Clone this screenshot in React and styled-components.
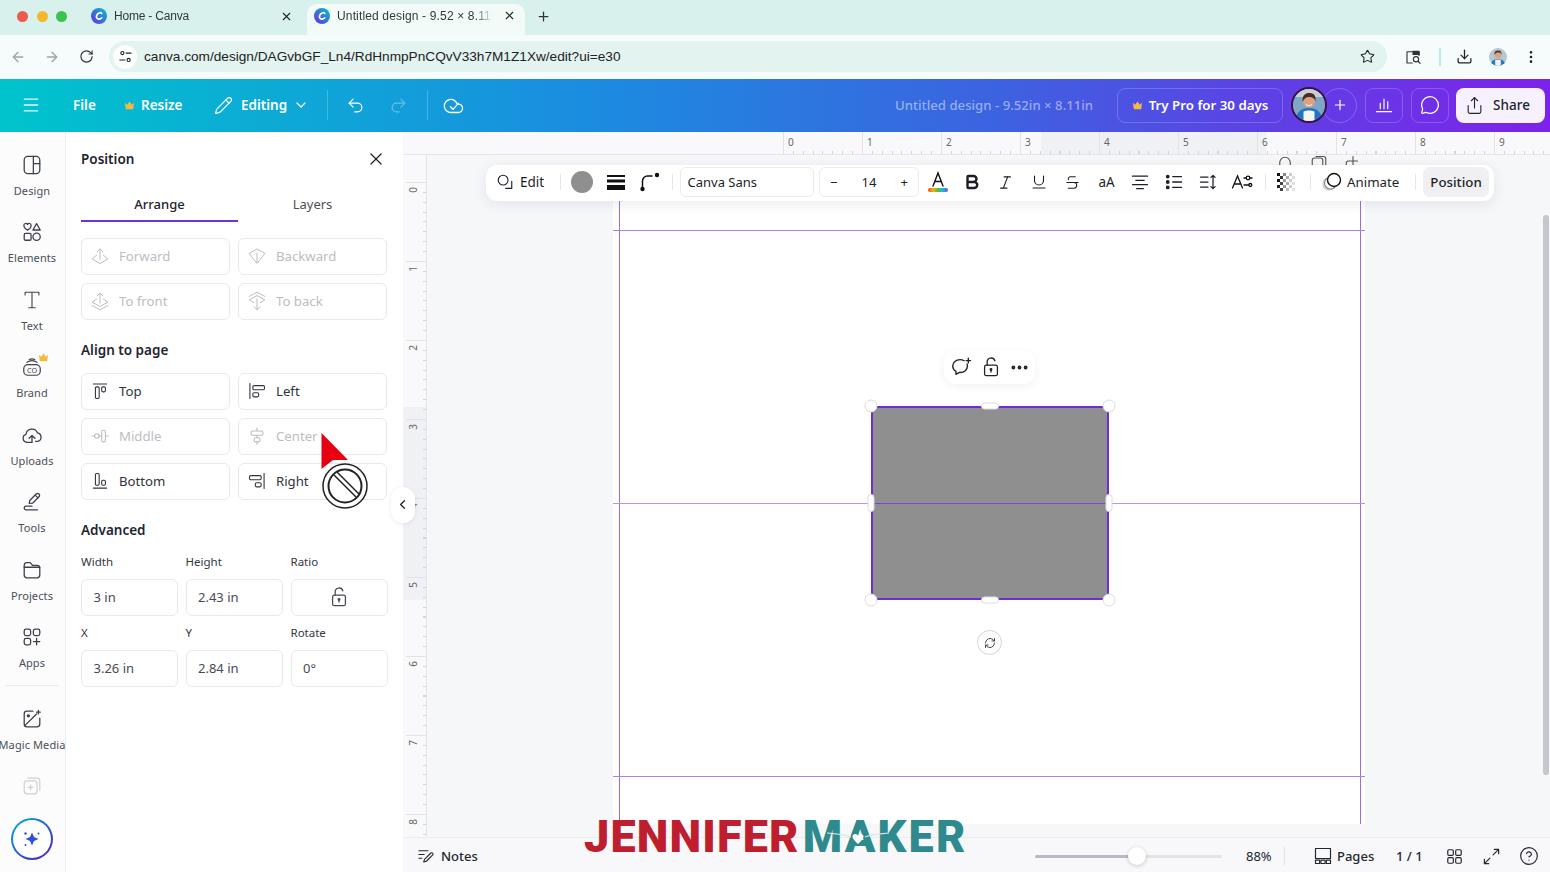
import React from "react";
import styled, { createGlobalStyle } from "styled-components";
import {
  X, Plus, ArrowLeft, ArrowRight, RotateCw, Star, Download, EllipsisVertical, Menu, Pencil, ChevronDown,
  Undo2, Redo2, Share, MessageCircle, ChevronLeft, CircleHelp, Ellipsis, RefreshCw,
  Bold, Italic, Underline, Strikethrough,
} from "lucide-react";

const Global = createGlobalStyle`
  html, body { margin: 0; padding: 0; width: 1550px; height: 872px; overflow: hidden; background: #fff; }
  body { font-family: "Noto Sans", "Open Sans", sans-serif; color: #1f2430; }
  * { box-sizing: border-box; }
`;

const Root = styled.div`position: relative; width: 1550px; height: 872px; overflow: hidden; display: flex; flex-direction: column;`;

/* browser chrome */
const TabStrip = styled.div`height: 35px; background: #d8f1ec; display: flex; align-items: center; position: relative; flex: none; padding-bottom: 3px;`;
const Light = styled.span`width: 11px; height: 11px; border-radius: 50%; background: ${p => p.$c}; margin-left: ${p => p.$ml}px; flex: none;`;
const Tab = styled.div`
  width: ${p => p.$w}px; margin-left: ${p => p.$ml}px; flex: none; gap: 7px; display: flex; align-items: center;
  align-self: ${p => (p.$active ? "stretch" : "center")};
  margin-top: ${p => (p.$active ? 4 : 0)}px; margin-bottom: ${p => (p.$active ? -3 : 0)}px;
  padding: ${p => (p.$active ? "0 9px 8px 7px" : "0 9px 0 7px")};
  height: ${p => (p.$active ? "auto" : "28px")};
  background: ${p => (p.$active ? "#f3fbf9" : "transparent")}; border-radius: 10px 10px 0 0;
`;
const TabText = styled.span`
  font: 12px "Liberation Sans", Arial, sans-serif; color: #2f3a3a; flex: 1; min-width: 0; white-space: nowrap; overflow: hidden;
  letter-spacing: ${p => (p.$active ? 0.15 : -0.2)}px;
  -webkit-mask-image: linear-gradient(90deg, #000 86%, transparent 98%);
`;
const NewTab = styled.span`margin-left: 11px; display: flex; color: #333;`;
const AddressRow = styled.div`height: 44px; background: #f6fcfb; display: flex; align-items: center; flex: none; padding: 0 0 1px 1px;`;
const NavIcon = styled.span`
  width: ${p => p.$w || 34}px; margin-left: ${p => p.$ml || 0}px; flex: none; display: flex; justify-content: center; color: ${p => p.$c || "#333"};
`;
const Pill = styled.div`
  margin-left: 6px; width: 1278px; height: 31px; border-radius: 16px; background: #e3f3f0; display: flex; align-items: center; padding: 0 12px 0 4px;
`;
const TuneBadge = styled.span`width: 24px; height: 24px; border-radius: 50%; background: #fbfefd; display: flex; align-items: center; justify-content: center; color: #222;`;
const Url = styled.span`font: 13.65px "Liberation Sans", Arial, sans-serif; color: #222; margin-left: 7px; flex: 1;`;
const VLine = styled.span`width: 2px; height: 18px; background: #bdeaea; margin: 0 15px 0 9px;`;

/* canva header */
const Header = styled.header`
  height: 53px; flex: none; display: flex; align-items: center; color: #fff; padding: 0 5px 1px 0;
  background: linear-gradient(90deg, #00c4cc 0%, #1b8ce0 38%, #3c63e0 64%, #5a44e4 80%, #7d22ea 100%);
`;
const HItem = styled.div`
  display: flex; align-items: center; gap: ${p => p.$gap || 0}px; margin-left: ${p => p.$ml}px; width: ${p => p.$w}px; flex: none;
  font-size: 13.5px; font-weight: 600; color: ${p => p.$c || "#fff"}; white-space: nowrap; opacity: ${p => p.$o || 1};
`;
const HSep = styled.span`width: 1px; height: 30px; background: rgba(255,255,255,.22); margin-left: ${p => p.$ml}px; flex: none;`;
const DesignTitle = styled.div`margin-left: auto; font-size: 13.2px; font-weight: 500; color: rgba(255,255,255,.48); white-space: nowrap; width: 198px;`;
const ProBtn = styled.div`
  margin-left: 24px; width: 166px; height: 35px; border-radius: 8px; border: 1px solid rgba(255,255,255,.2); display: flex; align-items: center; justify-content: center; gap: 6px;
  font-size: 13.3px; font-weight: 600; white-space: nowrap;
`;
const People = styled.div`margin-left: 8px; display: flex; align-items: center; position: relative; width: 66px;`;
const AddPerson = styled.span`position: absolute; left: 31px; width: 35px; height: 35px; border-radius: 50%; border: 1px solid rgba(255,255,255,.22); display: flex; align-items: center; justify-content: center;`;
const AvatarClip = styled.span`position: relative; width: 36px; height: 36px; border-radius: 50%; overflow: hidden; border: 2px solid #3a1240; z-index: 1; display: block;`;
const HeadBtn = styled.span`margin-left: ${p => p.$ml}px; width: 38px; height: 35px; border-radius: 8px; border: 1px solid rgba(255,255,255,.2); display: flex; align-items: center; justify-content: center;`;
const ShareBtn = styled.div`
  margin-left: 7px; width: 89px; height: 35px; border-radius: 8px; background: #f6f1fd; color: #1f2430; display: flex; align-items: center; justify-content: center; gap: 9px; font-size: 13.5px; font-weight: 500; padding-right: 6px;
`;

/* body */
const Body = styled.div`flex: 1; display: flex; min-height: 0;`;
const Rail = styled.nav`width: 66px; flex: none; background: #fcfcfd; border-right: 1px solid #eeeef1; padding: 21.5px 1px 0 0; display: flex; flex-direction: column; align-items: center;`;
const RailItem = styled.div`height: ${p => p.$h || 67.5}px; width: 64px; flex: none; display: flex; flex-direction: column; align-items: center; color: #3c4048; position: relative;`;
const RailLabel = styled.span`margin-top: 8px; font-size: 11px; line-height: 14px; color: #4b4f58; white-space: nowrap; letter-spacing: .1px;`;
const RailRule = styled.div`width: 54px; height: 1px; background: #ececef; margin: -9px 0 22px; flex: none;`;
const Crown = styled.span`position: absolute; left: 38px; top: -4px; display: flex;`;
const MagicBtn = styled.div`
  width: 42px; height: 42px; border-radius: 50%; margin-top: 2px; flex: none; padding: 2px;
  background: linear-gradient(135deg, #00b8c8, #2d4fd0 60%, #5a1fc0);
`;
const MagicInner = styled.div`width: 100%; height: 100%; background: #fff; border-radius: 50%; display: flex; align-items: center; justify-content: center;`;

const Panel = styled.aside`width: 337px; flex: none; background: #fff; padding: 0 15px; position: relative;`;
const PanelHead = styled.div`height: 54px; display: flex; align-items: center; justify-content: space-between; font-size: 13.5px; font-weight: 600; color: #1f2430; padding-right: 2px;`;
const Tabs = styled.div`display: grid; grid-template-columns: 157px 149px; height: 36px; margin-bottom: 16px;`;
const PanelTab = styled.div`
  display: flex; align-items: center; justify-content: center; font-size: 13px; height: 36px; padding-top: 1px;
  color: ${p => (p.$on ? "#1f2430" : "#4b4f58")}; font-weight: ${p => (p.$on ? 500 : 400)};
  border-bottom: 2px solid ${p => (p.$on ? "#6b35d9" : "transparent")};
`;
const BtnGrid = styled.div`display: grid; grid-template-columns: 149px 149px; gap: 8px;`;
const ActBtn = styled.div`
  height: 37px; border: 1px solid #e9e9ed; border-radius: 6px; display: flex; align-items: center; padding: 0 0 1px 8px; gap: 9px; font-size: 13.2px;
  color: ${p => (p.$off ? "#bcbdc3" : "#30343c")};
`;
const Heading = styled.div`font-size: 13.5px; font-weight: 600; color: #1f2430; height: 20px; line-height: 20px; margin: 20px 0 ${p => p.$mb}px;`;
const FieldGrid = styled.div`display: grid; grid-template-columns: 97px 97.5px 97.5px; column-gap: 7.5px; row-gap: 8.5px;`;
const Field = styled.div`display: flex; flex-direction: column; gap: 8.5px;`;
const FieldLabel = styled.label`font-size: 11.5px; line-height: 15px; height: 17px; color: #33373f;`;
const FieldBox = styled.div`
  height: 37px; border: 1px solid #e9e9ed; border-radius: 6px; display: flex; align-items: center; font-size: 13px; color: #474b53; padding-bottom: 1px;
  padding-left: ${p => (p.$center ? 0 : 11.5)}px; justify-content: ${p => (p.$center ? "center" : "flex-start")};
`;
const Collapse = styled.div`
  position: absolute; left: 325px; top: 355px; width: 24px; height: 36px; border-radius: 12px; background: #fff; box-shadow: 0 1px 5px rgba(0,0,0,.08);
  display: flex; align-items: center; justify-content: center; color: #222; z-index: 3; padding-right: 1px; padding-bottom: 2px;
`;

const Main = styled.main`flex: 1; display: flex; flex-direction: column; position: relative; min-width: 0;`;
const TopRuler = styled.div`
  height: 23px; flex: none; display: flex; border-bottom: 1px solid #e4e4ea; padding-left: 380px; font-size: 10px; color: #666; background-color: #f9f9fb;
  background-image:
    repeating-linear-gradient(90deg, #d4d4da 0 1px, transparent 1px 9.875px),
    linear-gradient(90deg, transparent 638px, #f0f1f4 638px 863px, transparent 863px);
  background-size: 100% 3px, 100% 100%;
  background-position: 380px bottom, 0 0;
  background-repeat: no-repeat;
`;
const RulerCell = styled.span`width: 79px; flex: none; border-left: 1px solid #e2e2e8; padding-left: 4px; line-height: 20px; height: 22px;`;
const Middle = styled.div`flex: 1; display: flex; min-height: 0;`;
const LeftRuler = styled.div`
  width: 24px; flex: none; border-right: 1px solid #e4e4ea; padding-top: 27px; overflow: hidden; font-size: 10px; color: #666; background-color: #f9f9fb;
  background-image:
    repeating-linear-gradient(180deg, #d4d4da 0 1px, transparent 1px 9.875px),
    linear-gradient(180deg, transparent 252px, #f0f1f4 252px 445px, transparent 445px);
  background-size: 3px 100%, 100% 100%;
  background-position: right 27px, 0 0;
  background-repeat: no-repeat;
`;
const VCell = styled.div`height: 79px; border-top: 1px solid #e2e2e8; position: relative; width: 20px; margin-left: 3px;`;
const VNum = styled.span`position: absolute; left: 4px; top: 1px; transform: rotate(-90deg); line-height: 12px;`;

const Canvas = styled.div`flex: 1; position: relative; overflow: hidden; background: #f6f7f9;`;
const Page = styled.div`position: absolute; left: 186px; top: 30px; width: 752px; height: 639px; background: #fff;`;
const GuideV = styled.span`position: absolute; top: 45px; height: 624px; width: 1px; left: ${p => p.$x}px; background: #9a6ce6;`;
const GuideH = styled.span`position: absolute; left: 186px; width: 752px; height: 1px; top: ${p => p.$y}px; background: #a883ea;`;
const GuideMid = styled(GuideH)`
  z-index: 1;
  background: linear-gradient(90deg, #b795ee 258px, #7a45e0 258px 496px, #b795ee 496px);
`;
const Shape = styled.div`position: absolute; left: 444px; top: 251px; width: 238px; height: 194px; background: #8f8f8f; outline: 2px solid #6b2fd3; outline-offset: -2px;`;
const Handle = styled.span`
  position: absolute; transform: translate(-50%, -50%); left: ${p => p.$x}%; top: ${p => p.$y}%; background: #fff; border: 1px solid #dcdce0; z-index: 2;
  width: ${p => p.$w}px; height: ${p => p.$h}px; border-radius: 7px;
`;
const MiniBar = styled.div`
  position: absolute; left: 517px; top: 195px; width: 91px; height: 34px; background: #fff; border-radius: 12px; box-shadow: 0 2px 10px rgba(0,0,0,.06);
  display: flex; align-items: center; justify-content: space-between; padding: 0 5px 0 6px; color: #222;
`;
const RotateBtn = styled.div`
  position: absolute; left: 550px; top: 475px; width: 25px; height: 25px; border-radius: 50%; background: #fff; border: 1px solid #d4d4d8; display: flex; align-items: center; justify-content: center; color: #333;
`;
const Scroll = styled.span`position: absolute; right: 1px; top: 60px; height: 560px; width: 6px; border-radius: 3px; background: #c6c7cc;`;
const PageActions = styled.div`position: absolute; left: 849px; top: 0; display: flex; gap: 16px; color: #555;`;

const Toolbar = styled.div`
  position: absolute; left: 83px; top: 33px; width: 1008px; height: 36px; background: #fff; border-radius: 11px; box-shadow: 0 3px 14px rgba(30,30,60,.09); z-index: 4;
  display: flex; align-items: center; color: #1c1f26; padding-bottom: 2px;
`;
const ToolEdit = styled.div`margin-left: 10px; display: flex; align-items: center; gap: 6px; font-size: 13.5px; width: 49px; flex: none;`;
const TSep = styled.span`width: 1px; height: 16px; background: #e7e7ea; margin-left: ${p => p.$ml}px; flex: none;`;
const Swatch = styled.span`width: 22px; height: 22px; border-radius: 50%; background: #8f8f8f; margin-left: 10px; flex: none;`;
const ToolIcon = styled.span`width: ${p => p.$w || 33.75}px; height: 30px; margin-left: ${p => p.$ml || 0}px; flex: none; display: flex; align-items: center; justify-content: center; font-size: 13.5px;`;
const FontField = styled.div`margin-left: 7px; width: 134px; height: 30px; flex: none; border: 1px solid #ececef; border-radius: 6px; display: flex; align-items: center; padding-left: 6.5px; font-size: 13px;`;
const SizeField = styled.div`margin-left: 5px; width: 100px; height: 30px; flex: none; border: 1px solid #ececef; border-radius: 6px; display: flex; align-items: center; justify-content: space-between; padding: 0 10px; font-size: 13px;`;
const ToolAnimate = styled.div`margin-left: 11px; width: 78px; flex: none; display: flex; align-items: center; gap: 5px; font-size: 13.3px;`;
const ToolPosition = styled.div`margin-left: 7px; width: 66px; height: 30px; border-radius: 7px; background: #f0f0f3; flex: none; display: flex; align-items: center; justify-content: center; font-size: 13.3px; font-weight: 500;`;

const BottomBar = styled.footer`
  height: 35px; flex: none; background: #f8f8fb; border-top: 1px solid #ebebf0; display: flex; align-items: center; font-size: 13px; color: #23262d; padding: 2px 0 0 14px;
`;
const BItem = styled.div`display: flex; align-items: center; gap: ${p => p.$gap || 0}px; margin-left: ${p => p.$ml || 0}px; width: ${p => (p.$w ? `${p.$w}px` : "auto")}; flex: none; white-space: nowrap; font-weight: ${p => p.$fw || 400};`;
const Slider = styled.div`margin-left: 556px; width: 187px; height: 3px; flex: none; border-radius: 2px; background: linear-gradient(90deg, #b8bac4 0 102px, #e3e3e8 102px); position: relative;`;
const Thumb = styled.span`position: absolute; left: 93px; top: -7.5px; width: 18px; height: 18px; border-radius: 50%; background: #fff; box-shadow: 0 1px 4px rgba(0,0,0,.2);`;
const BSep = styled.span`width: 1px; height: 18px; background: #e1e1e6; margin-left: ${p => p.$ml}px; flex: none;`;

/* overlays */
const Watermark = styled.div`
  position: absolute; left: 584px; top: 809px; font: 900 45px/56px Roboto, "Liberation Sans", sans-serif; white-space: nowrap; z-index: 8; display: flex;
`;
const WmRed = styled.span`color: #bf1e2e; letter-spacing: 1.15px;`;
const WmTeal = styled.span`color: #2f8a8e; letter-spacing: 2.2px; margin-left: 3px; position: relative;`;
const WmWing = styled.svg`position: absolute; left: 20px; top: 17px;`;
const PointerLayer = styled.svg`position: absolute; left: 316px; top: 428px; z-index: 9;`;

/* icons */
const Svg = ({ s = 20, sw = 1.5, c = "currentColor", vb = "0 0 24 24", children, f = "none" }) => (
  <svg width={s} height={s} viewBox={vb} fill={f} stroke={c} strokeWidth={sw} strokeLinecap="round" strokeLinejoin="round" style={{ flex: "none", display: "block" }}>{children}</svg>
);

const Favicon = () => (
  <svg width="16" height="16" viewBox="0 0 16 16" style={{ flex: "none" }}>
    <defs><linearGradient id="fav" x1="0" y1="1" x2="1" y2="0"><stop offset="0" stopColor="#6a2be0" /><stop offset="1" stopColor="#00c4cc" /></linearGradient></defs>
    <circle cx="8" cy="8" r="8" fill="url(#fav)" />
    <path d="M10.8 5.6C10 3.9 6.2 4.6 5.5 8c-.5 3 3 4.2 5.3 1.8" fill="none" stroke="#fff" strokeWidth="1.6" strokeLinecap="round" />
  </svg>
);

const CrownIcon = ({ s = 11 }) => (
  <svg width={s} height={s} viewBox="0 0 12 12" style={{ flex: "none" }}>
    <path d="M1 3l2.5 2.2L6 1.5l2.5 3.7L11 3l-1 7H2z" fill="#f5b942" />
  </svg>
);

const Portrait = () => (
  <svg width="32" height="32" viewBox="0 0 32 32" style={{ display: "block" }}>
    <rect width="32" height="32" fill="#7fa6c6" />
    <rect width="32" height="8" fill="#c4cfd6" />
    <path d="M3 32c0-9 5-13 13-13s13 4 13 13z" fill="#1f74c2" />
    <path d="M10.500 32V22.500c2-1.500 9-1.500 11 0V32z" fill="#f6f4f0" />
    <circle cx="16" cy="12.500" r="6" fill="#dba383" />
    <path d="M9.600 13C8.800 5 14 3.500 17 4c4.400 0 6.200 3.500 5.400 8.500-.8-3-2.400-4.500-6-4.500-3 0-5 1.200-6.800 5z" fill="#4f2a1a" />
    <path d="M13 15.500c2 1.500 4 1.500 6 0" stroke="#fff" strokeWidth="1" fill="none" />
  </svg>
);

const MiniPortrait = () => (
  <svg width="18" height="18" viewBox="0 0 32 32" style={{ borderRadius: "50%", display: "block" }}>
    <rect width="32" height="32" fill="#b7c7cf" />
    <path d="M3 32c0-9 5-12 13-12s13 3 13 12z" fill="#2a78bd" />
    <path d="M11 32V21h10v11z" fill="#f4f2ee" />
    <circle cx="16" cy="12" r="6" fill="#d9a486" />
    <path d="M9.500 12C9 5 14 4 17 4.500c4 0 6 3 5.400 7.500-1-3-2-4-6-4-3 0-5 1-6.900 4z" fill="#4b3327" />
  </svg>
);

const PadLock = ({ s = 22 }) => (
  <Svg s={s} sw={1.400}>
    <rect x="5" y="10" width="14" height="11.500" rx="2" />
    <path d="M7.800 10V6.500a4.300 4.300 0 0 1 8.400-1.300" />
    <circle cx="12" cy="14.800" r=".9" fill="currentColor" />
    <path d="M12 15v2.500" />
  </Svg>
);

const Icons = {
  design: <Svg s={22} sw={1.4}><rect x="3.500" y="2.500" width="17" height="19" rx="4" /><path d="M13.500 2.500v19M13.500 10.500h7" /></Svg>,
  elements: <Svg s={22} sw={1.4}><path d="M8 11S3.800 8.500 3.800 5.700C3.800 3 7 2.600 8 4.600c1-2 4.200-1.600 4.200 1.100C12.200 8.500 8 11 8 11z" transform="translate(-.5 -.5) scale(.95)" /><path d="M17 2.800l4 7h-8z" /><rect x="3.500" y="13.500" width="7.500" height="7.500" rx="1.500" /><circle cx="17" cy="17.200" r="4" /></Svg>,
  text: <Svg s={22} sw={1.2}><path d="M4.500 6.500V3.500h15v3M12 3.500v17M8.500 20.500h7" /></Svg>,
  brand: (
    <Svg s={22} sw={1.3}>
      <rect x="3" y="9.500" width="18" height="11.500" rx="4.500" />
      <path d="M6.500 7c3-2.500 8-2.500 11 0M9 3.800c2-.8 4-.8 6 0" />
      <text x="12" y="18" fontSize="8" fontFamily="Noto Sans, sans-serif" textAnchor="middle" stroke="none" fill="currentColor">CO</text>
    </Svg>
  ),
  uploads: <Svg s={22} sw={1.4}><path d="M12 20l-5.500 0a4.500 4.500 0 0 1-1-8.800A6.500 6.500 0 0 1 18 9.800a4.700 4.700 0 0 1 .3 9.200L16 19" /><path d="M12 20v-7M8.800 15.500l3.200-3 3.200 3" /></Svg>,
  tools: <Svg s={22} sw={1.4}><path d="M9 13.500l.6-3.200 7-7a2 2 0 0 1 3 3l-7 7z" /><path d="M15.500 4.500l3 3" /><path d="M12 16.500H5.500a2 2 0 0 0 0 4H18" /></Svg>,
  projects: <Svg s={22} sw={1.4}><path d="M3.500 7a3 3 0 0 1 3-3h3.600l2.400 3h5a3 3 0 0 1 3 3v7.500a3 3 0 0 1-3 3h-11a3 3 0 0 1-3-3z" /><path d="M3.500 9h17" /></Svg>,
  apps: <Svg s={22} sw={1.4}><rect x="3.500" y="3.500" width="7" height="7" rx="2" /><rect x="13.500" y="3.500" width="7" height="7" rx="2" /><rect x="3.500" y="13.500" width="7" height="7" rx="2" /><path d="M17 13.500v7M13.500 17h7" /></Svg>,
  magic: <Svg s={22} sw={1.4}><path d="M13 3.500H6.500a3 3 0 0 0-3 3v11a3 3 0 0 0 3 3h11a3 3 0 0 0 3-3V11" /><path d="M3.800 19.500L17 6.500" /><path d="M19 2.500v4M17 4.500h4" /><circle cx="8" cy="8.500" r="1.100" fill="currentColor" /></Svg>,
  stack: <Svg s={22} sw={1.3} c="#cfd0d4"><rect x="3.500" y="6.500" width="14" height="14" rx="3" /><path d="M7.500 3.500h10a3 3 0 0 1 3 3v10" /><path d="M10.500 11v5M8 13.500h5" /></Svg>,
  forward: <Svg sw={1.2}><path d="M8 11l-5.500 4.500L12 21l9.500-5.500L16 11" /><path d="M12 16V3.500M8.500 7L12 3.500 15.500 7" /></Svg>,
  backward: <Svg sw={1.2}><path d="M8 16L2.500 9 12 3.500 21.500 9 16 16" /><path d="M12 8.500V20.500M8.500 17l3.500 3.500 3.500-3.500" /></Svg>,
  front: <Svg sw={1.2}><path d="M8 9.500l-5.500 4L12 18.500l9.500-5-5.500-4" /><path d="M2.500 17.500L12 22.500l9.500-5" /><path d="M12 14.500V2.500M8.500 6L12 2.500 15.500 6" /></Svg>,
  back: <Svg sw={1.2}><path d="M8 14L2.500 10.500 12 5.500l9.500 5L16 14" /><path d="M2.500 6.500L12 1.500l9.500 5" /><path d="M12 9.500V22.500M8.500 19l3.500 3.500 3.500-3.500" /></Svg>,
  top: <Svg sw={1.3}><path d="M4 3.500h16" /><rect x="6.500" y="7" width="4.500" height="14" rx="1.500" /><rect x="14" y="7" width="4.500" height="6" rx="1.500" /></Svg>,
  left: <Svg sw={1.3}><path d="M3.500 3v18" /><rect x="7" y="5.500" width="14" height="5" rx="1.500" /><rect x="7" y="14" width="7" height="5" rx="1.500" /></Svg>,
  middle: <Svg sw={1.3}><path d="M2.500 12h3M11 12h3M19 12h3" /><circle cx="8.200" cy="12" r="2.700" /><rect x="14" y="5" width="4.500" height="14" rx="1.500" /></Svg>,
  center: <Svg sw={1.3}><path d="M12 2.500v3M12 11v3M12 19v3" /><rect x="5" y="6" width="14" height="5" rx="1.500" /><rect x="8.500" y="14" width="7" height="5" rx="1.500" /></Svg>,
  bottom: <Svg sw={1.3}><path d="M4 20.500h16" /><rect x="6.500" y="3" width="4.500" height="14" rx="1.500" /><rect x="14" y="11" width="4.500" height="6" rx="1.500" /></Svg>,
  right: <Svg sw={1.3}><path d="M20.500 3v18" /><rect x="3" y="5.500" width="14" height="5" rx="1.500" /><rect x="10" y="14" width="7" height="5" rx="1.500" /></Svg>,
  commentPlus: <Svg s={22} sw={1.5}><path d="M15.500 5.200C14 4.400 12.500 4 11 4 6.500 4 3 7 3 11c0 2.500 1.300 4.600 3.500 5.800L6.500 20l3.700-2.100c.3 0 .5.100.800.100 4.500 0 8-3 8-7 0-.8-.1-1.500-.4-2.200" /><path d="M20 2.500v5M17.500 5h5" /></Svg>,
};

const railItems = [
  ["design", "Design"], ["elements", "Elements"], ["text", "Text"], ["brand", "Brand"],
  ["uploads", "Uploads"], ["tools", "Tools"], ["projects", "Projects"], ["apps", "Apps"],
];

const EditIcon = () => <Svg s={18} sw={1.5}><circle cx="9.500" cy="9.500" r="6.500" /><path d="M21 11v9.500h-8" /></Svg>;
const StrokeLines = () => (
  <svg width="18" height="16" viewBox="0 0 18 16"><rect y="1" width="18" height="2" fill="#111" /><rect y="5.500" width="18" height="3" fill="#111" /><rect y="11" width="18" height="5" fill="#111" /></svg>
);
const CornerIcon = () => (
  <svg width="20" height="20" viewBox="0 0 20 20" fill="none"><path d="M2.500 17V9a5 5 0 0 1 5-5h5" stroke="#111" strokeWidth="1.500" /><circle cx="2.500" cy="17" r="2.200" fill="#111" /><circle cx="17" cy="3" r="2.200" fill="#111" /></svg>
);
const TextColor = () => (
  <svg width="20" height="22" viewBox="0 0 20 22" fill="none">
    <defs><linearGradient id="rb" x1="0" x2="1" y1="0" y2="0"><stop offset="0" stopColor="#f2402d" /><stop offset=".25" stopColor="#f7b500" /><stop offset=".5" stopColor="#4fc04a" /><stop offset=".75" stopColor="#20b6e8" /><stop offset="1" stopColor="#6a4fe0" /></linearGradient></defs>
    <path d="M5 15L10 2l5 13M6.800 10.500h6.400" stroke="#111" strokeWidth="1.400" strokeLinecap="round" />
    <rect y="17" width="20" height="4" rx="2" fill="url(#rb)" />
  </svg>
);
const Checker = () => (
  <svg width="18" height="18" viewBox="0 0 6 6">
    {[[0,0,"#111"],[2,0,"#888"],[4,0,"#ccc"],[1,1,"#333"],[3,1,"#aaa"],[5,1,"#ddd"],[0,2,"#111"],[2,2,"#999"],[4,2,"#ccc"],[1,3,"#444"],[3,3,"#aaa"],[5,3,"#ddd"],[0,4,"#222"],[2,4,"#999"],[4,4,"#ccc"],[1,5,"#444"],[3,5,"#bbb"],[5,5,"#e2e2e2"]].map(([x,y,f]) => <rect key={`${x}${y}`} x={x} y={y} width="1" height="1" fill={f} />)}
  </svg>
);
const AnimateIcon = () => (
  <svg width="20" height="20" viewBox="0 0 20 20" fill="none" style={{ flex: "none" }}><circle cx="7" cy="12" r="6" stroke="#c8c8cc" strokeWidth="1.200" /><circle cx="8.500" cy="11" r="6" stroke="#888" strokeWidth="1.200" fill="#fff" /><circle cx="12" cy="8" r="6.500" stroke="#111" strokeWidth="1.400" fill="#fff" /></svg>
);
const AlignIcon = () => <Svg s={20} sw={1.500}><path d="M3 5h18M7 10h10M3 15h18M8 20h8" /></Svg>;
const BulletsIcon = () => (
  <Svg s={20} sw={1.600}>
    <circle cx="4.500" cy="5.500" r="1.500" fill="currentColor" /><circle cx="4.500" cy="12" r="1.500" fill="currentColor" /><circle cx="4.500" cy="18.500" r="1.500" fill="currentColor" />
    <path d="M10.500 5.500H21M10.500 12H21M10.500 18.500H21" />
  </Svg>
);
const TuneIcon = () => (
  <Svg s={15} sw={1.800}>
    <circle cx="7" cy="6.500" r="2.500" /><path d="M13 6.500h8" />
    <circle cx="17" cy="17.500" r="2.500" /><path d="M3 17.500h8" />
  </Svg>
);
const SpacingIcon = () => <Svg s={20} sw={1.5}><path d="M3 6h9M3 12h9M3 18h9" /><path d="M18 4v16M15.500 6.500L18 4l2.500 2.500M15.500 17.500L18 20l2.500-2.500" /></Svg>;
const EffectsIcon = () => (
  <svg width="22" height="20" viewBox="0 0 22 20" fill="none" stroke="#111" strokeWidth="1.300" strokeLinecap="round"><path d="M1.500 16L6.500 4l5 12M3.200 12h6.600" /><path d="M13 6h2M19 6h2M13 13h5" /><circle cx="17" cy="6" r="1.800" /><circle cx="19.300" cy="13" r="1.500" /></svg>
);

const Lang = { topLabels: ["0","1","2","3","4","5","6","7","8","9"], leftLabels: ["0","1","2","3","4","5","6","7","8"] };

export default function App() {
  return (
    <Root>
      <Global />
      <TabStrip>
        <Light $c="#ed5a52" $ml={17} />
        <Light $c="#f4b72e" $ml={9} />
        <Light $c="#3cc34b" $ml={8} />
        <Tab $w={217.5} $ml={17}>
          <Favicon />
          <TabText>Home - Canva</TabText>
          <X size={13} color="#222" />
        </Tab>
        <Tab $active $w={217.5} $ml={5.5}>
          <Favicon />
          <TabText $active>Untitled design - 9.52 × 8.11in</TabText>
          <X size={13} color="#222" strokeWidth={2} />
        </Tab>
        <NewTab><Plus size={15} /></NewTab>
      </TabStrip>

      <AddressRow>
        <NavIcon $c="#9aa4a4"><ArrowLeft size={16} /></NavIcon>
        <NavIcon $c="#9aa4a4"><ArrowRight size={16} /></NavIcon>
        <NavIcon><RotateCw size={15} strokeWidth={1.800} /></NavIcon>
        <Pill>
          <TuneBadge><TuneIcon /></TuneBadge>
          <Url>canva.com/design/DAGvbGF_Ln4/RdHnmpPnCQvV33h7M1Z1Xw/edit?ui=e30</Url>
          <Star size={15} strokeWidth={1.700} color="#222" />
        </Pill>
        <NavIcon $ml={9}>
          <Svg s={18} sw={1.500}><path d="M20 10V5H4v15h7" /><rect x="12" y="4.500" width="8" height="4" fill="currentColor" /><circle cx="16" cy="15" r="3.500" /><path d="M19 18l2.500 2.500" /></Svg>
        </NavIcon>
        <VLine />
        <Download size={17} color="#222" strokeWidth={1.800} />
        <NavIcon $w={50}><MiniPortrait /></NavIcon>
        <EllipsisVertical size={16} color="#222" />
      </AddressRow>

      <Header>
        <HItem $ml={21} $w={20}><Menu size={20} strokeWidth={1.600} color="#dff8fa" /></HItem>
        <HItem $ml={32} $w={25}>File</HItem>
        <HItem $ml={26} $w={60} $gap={6}><CrownIcon />Resize</HItem>
        <HItem $ml={30} $w={78} $gap={8}><Pencil size={19} strokeWidth={1.500} />Editing</HItem>
        <HItem $ml={1} $w={16}><ChevronDown size={16} strokeWidth={1.800} /></HItem>
        <HSep $ml={18} />
        <HItem $ml={18} $w={20}><Undo2 size={19} strokeWidth={1.500} /></HItem>
        <HItem $ml={23} $w={20} $o={0.35}><Redo2 size={19} strokeWidth={1.500} /></HItem>
        <HSep $ml={18} />
        <HItem $ml={15} $w={21}>
          <Svg s={21} sw={1.500}><path d="M17.500 20H9a7.500 7.500 0 1 1 7.200-9.600h1.300a4.800 4.800 0 1 1 0 9.600Z" /><path d="M8.500 13.500l3 3 6-7" /></Svg>
        </HItem>
        <DesignTitle>Untitled design - 9.52in × 8.11in</DesignTitle>
        <ProBtn><CrownIcon />Try Pro for 30 days</ProBtn>
        <People>
          <AvatarClip><Portrait /></AvatarClip>
          <AddPerson><Plus size={16} strokeWidth={1.800} /></AddPerson>
        </People>
        <HeadBtn $ml={8}>
          <Svg s={20} sw={1.400}><path d="M3 20h18M7.500 16.500V10M12 16.500V5M16.500 16.500V8" /></Svg>
        </HeadBtn>
        <HeadBtn $ml={8}><MessageCircle size={20} strokeWidth={1.500} /></HeadBtn>
        <ShareBtn><Share size={19} strokeWidth={1.400} />Share</ShareBtn>
      </Header>

      <Body>
        <Rail>
          {railItems.map(([k, label]) => (
            <RailItem key={k}>
              {Icons[k]}
              {k === "brand" && <Crown><CrownIcon /></Crown>}
              <RailLabel>{label}</RailLabel>
            </RailItem>
          ))}
          <RailRule />
          <RailItem>
            {Icons.magic}
            <RailLabel>Magic Media</RailLabel>
          </RailItem>
          <RailItem $h={41}>{Icons.stack}</RailItem>
          <MagicBtn>
            <MagicInner>
              <Svg s={24} sw={0} f="#2f4fd8" c="none">
                <path d="M12 5.500l2 4.500 4.500 2-4.500 2-2 4.500-2-4.500-4.500-2 4.500-2z" />
                <circle cx="5.500" cy="6.500" r="1.200" /><circle cx="18.500" cy="6.500" r="1" /><circle cx="5.500" cy="18" r="1" />
              </Svg>
            </MagicInner>
          </MagicBtn>
        </Rail>

        <Panel>
          <PanelHead>Position<X size={20} strokeWidth={1.500} color="#222" /></PanelHead>
          <Tabs>
            <PanelTab $on>Arrange</PanelTab>
            <PanelTab>Layers</PanelTab>
          </Tabs>
          <BtnGrid>
            <ActBtn $off>{Icons.forward}Forward</ActBtn>
            <ActBtn $off>{Icons.backward}Backward</ActBtn>
            <ActBtn $off>{Icons.front}To front</ActBtn>
            <ActBtn $off>{Icons.back}To back</ActBtn>
          </BtnGrid>
          <Heading $mb={13}>Align to page</Heading>
          <BtnGrid>
            <ActBtn>{Icons.top}Top</ActBtn>
            <ActBtn>{Icons.left}Left</ActBtn>
            <ActBtn $off>{Icons.middle}Middle</ActBtn>
            <ActBtn $off>{Icons.center}Center</ActBtn>
            <ActBtn>{Icons.bottom}Bottom</ActBtn>
            <ActBtn>{Icons.right}Right</ActBtn>
          </BtnGrid>
          <Heading $mb={13.500}>Advanced</Heading>
          <FieldGrid>
            <Field><FieldLabel>Width</FieldLabel><FieldBox>3 in</FieldBox></Field>
            <Field><FieldLabel>Height</FieldLabel><FieldBox>2.43 in</FieldBox></Field>
            <Field><FieldLabel>Ratio</FieldLabel><FieldBox $center><PadLock /></FieldBox></Field>
            <Field><FieldLabel>X</FieldLabel><FieldBox>3.26 in</FieldBox></Field>
            <Field><FieldLabel>Y</FieldLabel><FieldBox>2.84 in</FieldBox></Field>
            <Field><FieldLabel>Rotate</FieldLabel><FieldBox>0°</FieldBox></Field>
          </FieldGrid>
          <Collapse><ChevronLeft size={15} strokeWidth={2} /></Collapse>
        </Panel>

        <Main>
          <TopRuler>
            {Lang.topLabels.map(n => <RulerCell key={n}>{n}</RulerCell>)}
          </TopRuler>
          <Middle>
            <LeftRuler>
              {Lang.leftLabels.map(n => <VCell key={n}><VNum>{n}</VNum></VCell>)}
            </LeftRuler>
            <Canvas>
              <Page />
              <PageActions>
                <Svg s={18}><path d="M5 10a7 7 0 0 1 14 0v6H5z" /></Svg>
                <Svg s={18}><rect x="3" y="4" width="14" height="14" rx="3" /><path d="M8 2h10a3 3 0 0 1 3 3v8" /></Svg>
                <Svg s={18}><path d="M12 2v12M6 8h12M6 8a3 3 0 0 0-3 3v6" /></Svg>
              </PageActions>
              <GuideV $x={192} />
              <GuideV $x={933} />
              <GuideH $y={75} />
              <GuideH $y={621} />
              <Shape>
                <Handle $x={0} $y={0} $w={13} $h={13} />
                <Handle $x={100} $y={0} $w={13} $h={13} />
                <Handle $x={0} $y={100} $w={13} $h={13} />
                <Handle $x={100} $y={100} $w={13} $h={13} />
                <Handle $x={50} $y={0} $w={18} $h={7} />
                <Handle $x={50} $y={100} $w={18} $h={7} />
                <Handle $x={0} $y={50} $w={7} $h={18} />
                <Handle $x={100} $y={50} $w={7} $h={18} />
              </Shape>
              <GuideMid $y={348} />
              <MiniBar>
                {Icons.commentPlus}
                <PadLock />
                <Ellipsis size={21} strokeWidth={2.400} />
              </MiniBar>
              <RotateBtn><RefreshCw size={12} strokeWidth={1.800} /></RotateBtn>
              <Scroll />
            </Canvas>
          </Middle>
          <BottomBar>
            <BItem $gap={6} $w={62} $fw={500}>
              <Svg s={18} sw={1.500}><path d="M2.500 5h12M2.500 10h7M2.500 15h4" /><path d="M9 20l1-3.500 8.500-8.500a1.800 1.800 0 0 1 2.500 2.500L12.500 19z" /></Svg>
              Notes
            </BItem>
            <Slider><Thumb /></Slider>
            <BItem $ml={24} $w={38}>88%</BItem>
            <BSep $ml={0} />
            <BItem $ml={28} $gap={4} $w={61} $fw={500}>
              <Svg s={20} sw={1.400}><rect x="3" y="3" width="18" height="12" /><rect x="3" y="17" width="5" height="4" /><rect x="9.500" y="17" width="5" height="4" /><rect x="16" y="17" width="5" height="4" /></Svg>
              Pages
            </BItem>
            <BItem $ml={22} $w={29} $fw={500}>1 / 1</BItem>
            <BItem $ml={20}>
              <Svg s={19} sw={1.500}><rect x="3.500" y="3.500" width="7" height="7" rx="1.500" /><rect x="13.500" y="3.500" width="7" height="7" rx="1.500" /><rect x="3.500" y="13.500" width="7" height="7" rx="1.500" /><rect x="13.500" y="13.500" width="7" height="7" rx="1.500" /></Svg>
            </BItem>
            <BItem $ml={18}>
              <Svg s={19} sw={1.500}><path d="M14 10l7-7M15.500 3H21v5.500M10 14l-7 7M3 15.500V21h5.500" /></Svg>
            </BItem>
            <BItem $ml={18}><CircleHelp size={20} strokeWidth={1.400} /></BItem>
          </BottomBar>

          <Toolbar>
            <ToolEdit><EditIcon />Edit</ToolEdit>
            <TSep $ml={15} />
            <Swatch />
            <ToolIcon $w={34} $ml={6}><StrokeLines /></ToolIcon>
            <ToolIcon $w={34}><CornerIcon /></ToolIcon>
            <TSep $ml={5} />
            <FontField>Canva Sans</FontField>
            <SizeField><span>−</span><span>14</span><span>+</span></SizeField>
            <ToolIcon $ml={2}><TextColor /></ToolIcon>
            <ToolIcon><Bold size={18} strokeWidth={3.200} /></ToolIcon>
            <ToolIcon><Italic size={17} strokeWidth={1.600} /></ToolIcon>
            <ToolIcon><Underline size={18} strokeWidth={1.500} /></ToolIcon>
            <ToolIcon><Strikethrough size={17} strokeWidth={1.500} /></ToolIcon>
            <ToolIcon>aA</ToolIcon>
            <ToolIcon><AlignIcon /></ToolIcon>
            <ToolIcon><BulletsIcon /></ToolIcon>
            <ToolIcon><SpacingIcon /></ToolIcon>
            <ToolIcon><EffectsIcon /></ToolIcon>
            <TSep $ml={6.500} />
            <ToolIcon $w={34} $ml={3}><Checker /></ToolIcon>
            <TSep $ml={7} />
            <ToolAnimate><AnimateIcon />Animate</ToolAnimate>
            <TSep $ml={15} />
            <ToolPosition>Position</ToolPosition>
          </Toolbar>
        </Main>
      </Body>

      <Watermark>
        <WmRed>JENNIFER</WmRed>
        <WmTeal>
          MAKER
          <WmWing width="70" height="22" viewBox="0 0 70 22" fill="none">
            <path d="M4 7c10 1 18 1 24 4M66 7c-10 1-18 1-24 4" stroke="#d8e6e6" strokeWidth="1.200" />
            <path d="M35 18c-3-3-5.500-5-5.500-7.500 0-3 4-3.500 5.500-1 1.500-2.500 5.500-2 5.500 1C40.500 13 38 15 35 18z" fill="#fff" />
          </WmWing>
        </WmTeal>
      </Watermark>

      <PointerLayer width="56" height="84" viewBox="0 0 56 84" fill="none">
        <circle cx="29" cy="58" r="22" fill="#fff" stroke="#222" strokeWidth="1.500" />
        <circle cx="29" cy="58" r="16.500" fill="#fff" stroke="#222" strokeWidth="2" />
        <path d="M18 47l22 22M21 44l22 22" stroke="#222" strokeWidth="1.500" />
        <path d="M5.500 5L32 32H17L5.500 41z" fill="#e60012" />
      </PointerLayer>
    </Root>
  );
}
